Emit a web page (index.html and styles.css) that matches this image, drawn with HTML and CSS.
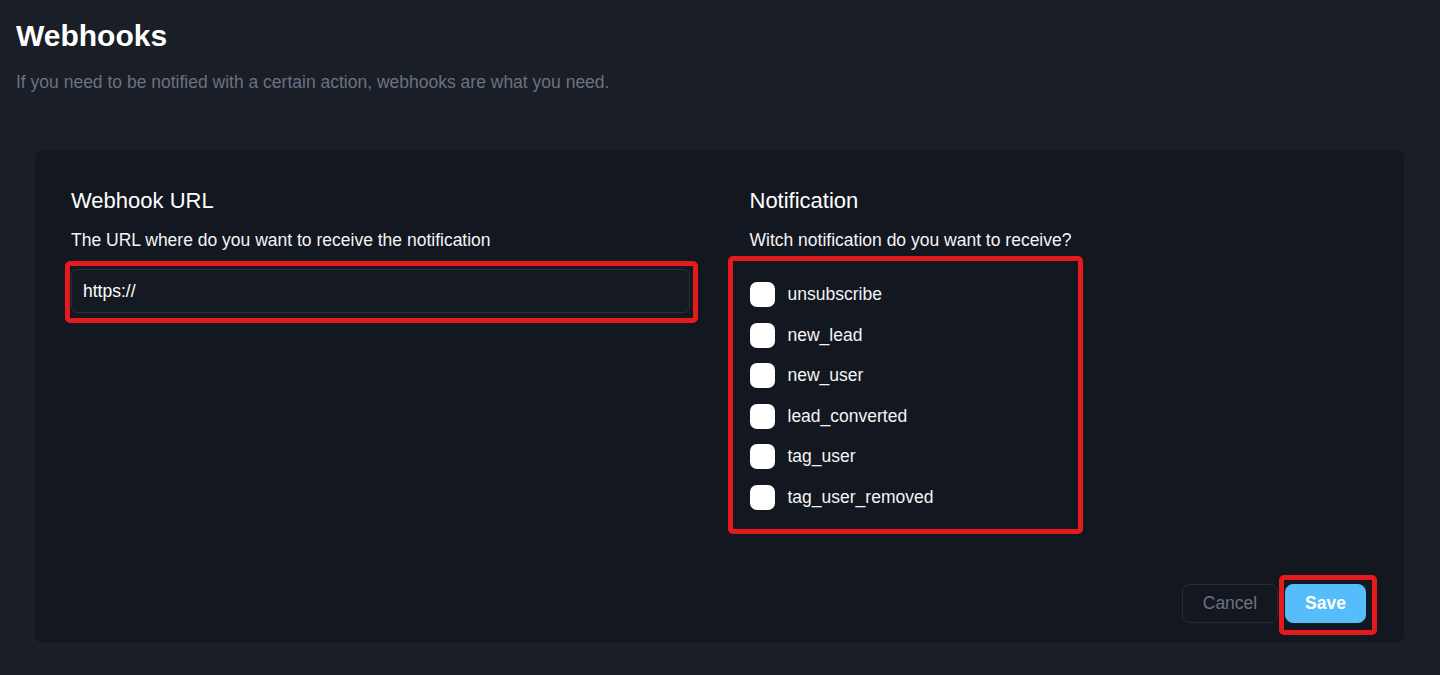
FILE: index.html
```html
<html>
<head>
  <link rel="stylesheet" href="styles.css">
</head>
<body>
<div class="header">
  <h1 class="title">Webhooks</h1>
  <p class="subtitle">If you need to be notified with a certain action, webhooks are what you need.</p>
</div>
<div class="card">
  <div class="columns">
    <div class="column">
      <h2 class="column-title">Webhook URL</h2>
      <p class="column-text">The URL where do you want to receive the notification</p>
      <div class="field marked">
        <input type="text" class="url-input" value="https://">
      </div>
    </div>
    <div class="column">
      <h2 class="column-title">Notification</h2>
      <p class="column-text">Witch notification do you want to receive?</p>
      <div class="options marked">
        <label class="option"><input type="checkbox" class="option-box"><span>unsubscribe</span></label>
        <label class="option"><input type="checkbox" class="option-box"><span>new_lead</span></label>
        <label class="option"><input type="checkbox" class="option-box"><span>new_user</span></label>
        <label class="option"><input type="checkbox" class="option-box"><span>lead_converted</span></label>
        <label class="option"><input type="checkbox" class="option-box"><span>tag_user</span></label>
        <label class="option"><input type="checkbox" class="option-box"><span>tag_user_removed</span></label>
      </div>
    </div>
  </div>
  <div class="actions">
    <a href="#" class="button button-cancel">Cancel</a>
    <a href="#" class="button button-save">Save</a>
  </div>
</div>
</body>
</html>
```

FILE: styles.css
```css
body {
  margin: 0;
  padding: 0;
  background-color: #191e27;
  font-family: "Liberation Sans", Arial, sans-serif;
  color: #f3f4f6;
}

.header {
  padding: 18px 16px 0;
}

.title {
  margin: 0;
  font-size: 30px;
  line-height: 36px;
  font-weight: bold;
  color: #fff;
}

.subtitle {
  margin: 16px 0 0;
  font-size: 17.5px;
  line-height: 24px;
  color: #6b7280;
}

.card {
  margin: 56px 36px 0 35px;
  padding: 37px 36px 20px;
  background-color: #13171f;
  border-radius: 8px;
}

.columns {
  display: grid;
  grid-template-columns: 1fr 1fr;
  column-gap: 60px;
}

.column-title {
  margin: 0;
  font-size: 22px;
  line-height: 28px;
  font-weight: normal;
  color: #fff;
}

.column-text {
  margin: 13px 0 0;
  font-size: 17.5px;
  line-height: 24px;
  color: #f3f4f6;
}

/* red annotation frames */
.marked {
  position: relative;
}

.marked::after {
  content: "";
  position: absolute;
  border: 5px solid #e51a1d;
  border-radius: 5px;
  pointer-events: none;
}

.field {
  margin-top: 17px;
}

.field::after {
  top: -8px;
  left: -6px;
  right: -8px;
  bottom: -10px;
}

.url-input {
  display: block;
  width: 100%;
  height: 44px;
  box-sizing: border-box;
  padding: 0 11px;
  background-color: #151a22;
  border: 1px solid #2a2f39;
  border-radius: 6px;
  color: #fff;
  font-family: "Liberation Sans", Arial, sans-serif;
  font-size: 17.5px;
  outline: none;
}

.options {
  display: flex;
  flex-direction: column;
  gap: 15.6px;
  width: 345px;
  box-sizing: border-box;
  margin: 9px 0 0 -17px;
  padding: 21px 17px 19px;
}

.options::after {
  top: -5px;
  left: -5px;
  right: -5px;
  bottom: -5px;
}

.option {
  display: flex;
  align-items: center;
  gap: 13px;
  font-size: 17.5px;
  color: #f3f4f6;
}

.option-box {
  appearance: none;
  -webkit-appearance: none;
  width: 25px;
  height: 25px;
  margin: 0;
  background-color: #fff;
  border-radius: 7px;
}

.actions {
  display: flex;
  justify-content: flex-end;
  gap: 7px;
  margin: 55px 2px 0 0;
}

.button {
  display: block;
  height: 39px;
  box-sizing: border-box;
  line-height: 37px;
  font-size: 17.5px;
  text-align: center;
  text-decoration: none;
  border-radius: 8px;
}

.button-cancel {
  width: 96px;
  border: 1px solid #262b34;
  color: #6b7280;
}

.button-save {
  position: relative;
  width: 81px;
  border: 1px solid #54bdfa;
  background-color: #54bdfa;
  color: #fff;
  font-weight: bold;
}

.button-save::after {
  content: "";
  position: absolute;
  top: -10px;
  left: -7px;
  right: -12px;
  bottom: -13px;
  border: 5px solid #e51a1d;
  border-radius: 5px;
}
```
